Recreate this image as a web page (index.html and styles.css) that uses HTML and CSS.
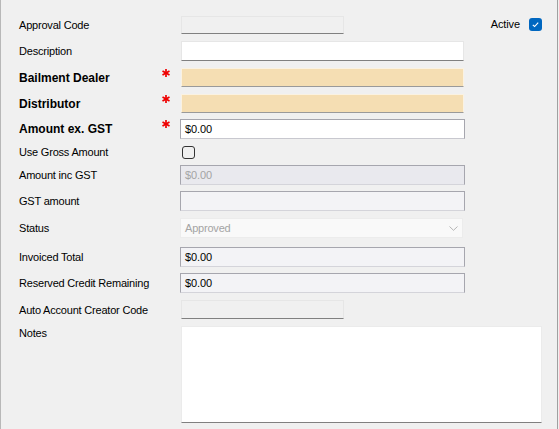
FILE: index.html
```html
<!DOCTYPE html>
<html>
<head>
<meta charset="utf-8">
<link rel="stylesheet" href="styles.css">
</head>
<body>
<div class="panel">
  <div class="row">
    <span class="label">Approval Code</span><span class="star"></span>
    <div class="box flat short"></div>
    <div class="active">
      <span class="active-label">Active</span>
      <svg class="cb" width="13" height="13" viewBox="0 0 13 13"><rect x="0" y="0" width="13" height="13" rx="3" fill="#0067c0"/><polyline points="3.8,6.8 5.6,8.5 9.2,4.6" fill="none" stroke="#fff" stroke-width="1.1"/></svg>
    </div>
  </div>
  <div class="row">
    <span class="label">Description</span><span class="star"></span>
    <div class="box flat white long h20"></div>
  </div>
  <div class="row">
    <span class="label bold">Bailment Dealer</span>
    <span class="star"><svg width="8" height="8" viewBox="0 0 8 8"><g stroke="#ee0000" stroke-width="1.7" stroke-linecap="butt"><line x1="4" y1="0" x2="4" y2="8"/><line x1="0.5" y1="2" x2="7.5" y2="6"/><line x1="0.5" y1="6" x2="7.5" y2="2"/></g></svg></span>
    <div class="box flat wheat long h19"></div>
  </div>
  <div class="row">
    <span class="label bold">Distributor</span>
    <span class="star"><svg width="8" height="8" viewBox="0 0 8 8"><g stroke="#ee0000" stroke-width="1.7" stroke-linecap="butt"><line x1="4" y1="0" x2="4" y2="8"/><line x1="0.5" y1="2" x2="7.5" y2="6"/><line x1="0.5" y1="6" x2="7.5" y2="2"/></g></svg></span>
    <div class="box flat wheat long h19"></div>
  </div>
  <div class="row">
    <span class="label bold">Amount ex. GST</span>
    <span class="star"><svg width="8" height="8" viewBox="0 0 8 8"><g stroke="#ee0000" stroke-width="1.7" stroke-linecap="butt"><line x1="4" y1="0" x2="4" y2="8"/><line x1="0.5" y1="2" x2="7.5" y2="6"/><line x1="0.5" y1="6" x2="7.5" y2="2"/></g></svg></span>
    <div class="box framed white wide">$0.00</div>
  </div>
  <div class="row check-row">
    <span class="label">Use Gross Amount</span><span class="star"></span>
    <svg class="cb cb-plain" width="13" height="13" viewBox="0 0 13 13"><rect x="0.5" y="0.5" width="12" height="12" rx="2.5" fill="none" stroke="#333" stroke-width="1"/></svg>
  </div>
  <div class="row">
    <span class="label">Amount inc GST</span><span class="star"></span>
    <div class="box framed disabled wide muted">$0.00</div>
  </div>
  <div class="row">
    <span class="label">GST amount</span><span class="star"></span>
    <div class="box framed readonly wide"></div>
  </div>
  <div class="row">
    <span class="label">Status</span><span class="star"></span>
    <div class="box select muted">
      <span>Approved</span>
      <svg width="9" height="5" viewBox="0 0 9 5"><polyline points="0.5,0.5 4.5,4.3 8.5,0.5" fill="none" stroke="#b5b5b5" stroke-width="1"/></svg>
    </div>
  </div>
  <div class="row">
    <span class="label">Invoiced Total</span><span class="star"></span>
    <div class="box framed readonly wide">$0.00</div>
  </div>
  <div class="row">
    <span class="label">Reserved Credit Remaining</span><span class="star"></span>
    <div class="box framed readonly wide">$0.00</div>
  </div>
  <div class="row">
    <span class="label">Auto Account Creator Code</span><span class="star"></span>
    <div class="box flat short h19"></div>
  </div>
  <div class="row notes-row">
    <span class="label">Notes</span><span class="star"></span>
    <div class="box flat white notes"></div>
  </div>
</div>
</body>
</html>
```

FILE: styles.css
```css
* { box-sizing: border-box; }
html, body {
  margin: 0;
  padding: 0;
  background: #f0f0f0;
}
body {
  font-family: "Liberation Sans", Arial, sans-serif;
  font-size: 11px;
  color: #000;
}
.panel {
  width: 558px;
  height: 429px;
  border-left: 1px solid #b8b8b8;
  border-right: 1px solid #a0a0a0;
  padding: 16px 15px 0 18px;
  display: flex;
  flex-direction: column;
  gap: 6px;
  overflow: hidden;
}
.row {
  display: flex;
  align-items: center;
}
.row:nth-child(2),
.row:nth-child(3),
.row:nth-child(4),
.row:nth-child(9),
.row:nth-child(12),
.row:nth-child(13) { margin-top: 1px; }
.row:nth-child(10) { margin-top: 3px; }

.label {
  width: 143px;
  flex: none;
  line-height: 14px;
  letter-spacing: -0.2px;
  white-space: nowrap;
}
.label.bold {
  font-weight: bold;
  font-size: 12px;
  letter-spacing: 0;
}
.star {
  width: 18px;
  flex: none;
  align-self: flex-start;
  padding-top: 1px;
}
.star svg { display: block; }
.box {
  flex: none;
  height: 20px;
  line-height: 18px;
  padding: 0 4px;
  white-space: nowrap;
  letter-spacing: -0.1px;
}
.h19 { height: 19px; line-height: 17px; }
.h20 { height: 20px; }
.flat {
  margin-left: 1px;
  border: 1px solid #e6e6e6;
  border-bottom: 1px solid #808080;
  background: #f0f0f0;
}
.short { width: 163px; height: 18px; }
.short.h19 { height: 19px; }
.long { width: 283px; }
.wide { width: 285px; }
.white { background: #fff; }
.wheat {
  background: #f5deb3;
  border-color: #faf2e2;
  border-bottom-color: #9a9a9a;
}
.framed {
  border: 1px solid #a6a6ae;
  border-bottom-color: #d4d4da;
}
.framed.white { border-color: #a6a6ae; border-bottom-color: #c8c8cf; }
.disabled { background: #e9e9ee; }
.readonly { background: #f3f3f6; }
.muted { color: #a4a4a4; }
.select {
  width: 283px;
  background: #f9f9f9;
  border: 1px solid #ececec;
  display: flex;
  align-items: center;
  justify-content: space-between;
  padding: 0 4px 0 4px;
  letter-spacing: -0.2px;
}
.select svg { display: block; margin-top: 1px; }
.active {
  margin-left: auto;
  display: flex;
  align-items: center;
  gap: 9px;
  align-self: flex-start;
  margin-top: 1px;
}
.active-label { line-height: 14px; letter-spacing: -0.1px; }
.cb { display: block; flex: none; }
.check-row { height: 14px; }
.cb-plain { margin-left: 2px; }
.notes-row { align-items: flex-start; }
.notes { width: 361px; height: 97px; border-color: #ebebeb; border-bottom-color: #808080; }
```
